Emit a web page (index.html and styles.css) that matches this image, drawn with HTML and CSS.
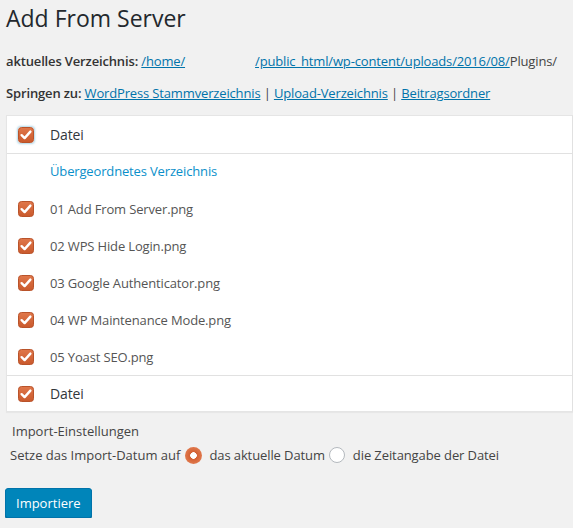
FILE: index.html
```html
<!DOCTYPE html>
<html>
<head>
<meta charset="utf-8">
<link rel="stylesheet" href="styles.css">
</head>
<body>
<div class="wrap">
  <h1 class="title">Add From Server</h1>
  <p class="line"><strong>aktuelles Verzeichnis:</strong> <a href="#">/home/</a><span class="gap"></span><a href="#">/public_html/wp-content/uploads/2016/08/</a>Plugins/</p>
  <p class="line"><strong>Springen zu:</strong> <a href="#">WordPress Stammverzeichnis</a> | <a href="#">Upload-Verzeichnis</a> | <a href="#">Beitragsordner</a></p>

  <div class="table">
    <div class="row head">
      <span class="cb focus"><svg viewBox="0 0 16 16" width="16" height="16"><defs><linearGradient id="g1" x1="0" y1="0" x2="0" y2="1"><stop offset="0" stop-color="#e0774a"/><stop offset="1" stop-color="#c9592c"/></linearGradient></defs><rect x="0.5" y="0.5" width="15" height="15" rx="3" fill="url(#g1)" stroke="#b9532a"/><path d="M3.6 8.2 L6.6 11.1 L12.4 4.6" fill="none" stroke="#fff" stroke-width="2.4" stroke-linecap="round" stroke-linejoin="round"/></svg></span>
      <span class="label">Datei</span>
    </div>
    <div class="row parent">
      <span class="cb-empty"></span>
      <a class="plink" href="#">Übergeordnetes Verzeichnis</a>
    </div>
    <div class="row file">
      <span class="cb"><svg viewBox="0 0 16 16" width="16" height="16"><rect x="0.5" y="0.5" width="15" height="15" rx="3" fill="url(#g1)" stroke="#b9532a"/><path d="M3.6 8.2 L6.6 11.1 L12.4 4.6" fill="none" stroke="#fff" stroke-width="2.4" stroke-linecap="round" stroke-linejoin="round"/></svg></span>
      <span class="label">01 Add From Server.png</span>
    </div>
    <div class="row file">
      <span class="cb"><svg viewBox="0 0 16 16" width="16" height="16"><rect x="0.5" y="0.5" width="15" height="15" rx="3" fill="url(#g1)" stroke="#b9532a"/><path d="M3.6 8.2 L6.6 11.1 L12.4 4.6" fill="none" stroke="#fff" stroke-width="2.4" stroke-linecap="round" stroke-linejoin="round"/></svg></span>
      <span class="label">02 WPS Hide Login.png</span>
    </div>
    <div class="row file">
      <span class="cb"><svg viewBox="0 0 16 16" width="16" height="16"><rect x="0.5" y="0.5" width="15" height="15" rx="3" fill="url(#g1)" stroke="#b9532a"/><path d="M3.6 8.2 L6.6 11.1 L12.4 4.6" fill="none" stroke="#fff" stroke-width="2.4" stroke-linecap="round" stroke-linejoin="round"/></svg></span>
      <span class="label">03 Google Authenticator.png</span>
    </div>
    <div class="row file">
      <span class="cb"><svg viewBox="0 0 16 16" width="16" height="16"><rect x="0.5" y="0.5" width="15" height="15" rx="3" fill="url(#g1)" stroke="#b9532a"/><path d="M3.6 8.2 L6.6 11.1 L12.4 4.6" fill="none" stroke="#fff" stroke-width="2.4" stroke-linecap="round" stroke-linejoin="round"/></svg></span>
      <span class="label">04 WP Maintenance Mode.png</span>
    </div>
    <div class="row file">
      <span class="cb"><svg viewBox="0 0 16 16" width="16" height="16"><rect x="0.5" y="0.5" width="15" height="15" rx="3" fill="url(#g1)" stroke="#b9532a"/><path d="M3.6 8.2 L6.6 11.1 L12.4 4.6" fill="none" stroke="#fff" stroke-width="2.4" stroke-linecap="round" stroke-linejoin="round"/></svg></span>
      <span class="label">05 Yoast SEO.png</span>
    </div>
    <div class="row foot">
      <span class="cb"><svg viewBox="0 0 16 16" width="16" height="16"><rect x="0.5" y="0.5" width="15" height="15" rx="3" fill="url(#g1)" stroke="#b9532a"/><path d="M3.6 8.2 L6.6 11.1 L12.4 4.6" fill="none" stroke="#fff" stroke-width="2.4" stroke-linecap="round" stroke-linejoin="round"/></svg></span>
      <span class="label">Datei</span>
    </div>
  </div>

  <div class="settings">
    <div class="settings-title">Import-Einstellungen</div>
    <div class="settings-row">
      <span>Setze das Import-Datum auf</span>
      <span class="radio on"></span>
      <span class="rlabel">das aktuelle Datum</span>
      <span class="radio"></span>
      <span class="rlabel">die Zeitangabe der Datei</span>
    </div>
  </div>

  <button class="btn">Importiere</button>
</div>
</body>
</html>
```

FILE: styles.css
```css
html, body {
  margin: 0;
  padding: 0;
  background: #f1f1f1;
}
body {
  font-family: "Open Sans", "Noto Sans", sans-serif;
  font-size: 13px;
  color: #444;
}
.wrap {
  padding: 0 0 0 6px;
}
.title {
  margin: 0;
  padding: 4px 0 0 0;
  font-size: 23px;
  font-weight: 400;
  line-height: 29px;
  color: #23282d;
}
.line {
  margin: 0;
  line-height: 20px;
  letter-spacing: -0.15px;
}
.line:nth-of-type(1) {
  margin-top: 18px;
}
.line:nth-of-type(2) {
  margin-top: 12px;
}
.line strong {
  font-weight: 600;
  color: #333;
}
.line a {
  color: #0073aa;
  text-decoration: underline;
}
.gap {
  display: inline-block;
  width: 70px;
}
.table {
  margin-top: 12px;
  background: #fff;
  border: 1px solid #e5e5e5;
  border-right-color: #e1e1e1;
  box-shadow: 0 1px 1px rgba(0,0,0,0.04);
  letter-spacing: -0.15px;
}
.row {
  display: flex;
  align-items: center;
  height: 37px;
  padding-left: 11px;
}
.head {
  height: 37px;
  border-bottom: 1px solid #e1e1e1;
}
.parent {
  height: 36px;
}
.parent .plink {
  position: relative;
  top: -1px;
}
.foot {
  height: 35px;
  border-top: 1px solid #e1e1e1;
}
.cb, .cb-empty {
  width: 16px;
  height: 16px;
  flex: none;
  display: block;
  margin-right: 16px;
  border-radius: 3px;
}
.cb svg {
  display: block;
}
.cb.focus {
  box-shadow: 0 0 2px 1px rgba(30,140,190,0.35);
}
.label {
  color: #555;
  font-size: 13px;
}
.head .label, .foot .label {
  color: #32373c;
  font-size: 14px;
}
.plink {
  color: #0a8fca;
  text-decoration: none;
}
.settings {
  padding: 7px 0 0 0;
}
.settings-title {
  padding-left: 6px;
  line-height: 24px;
  color: #444;
}
.settings-row {
  display: flex;
  align-items: center;
  padding-left: 4px;
  line-height: 24px;
}
.radio {
  width: 16px;
  height: 16px;
  border-radius: 50%;
  border: 1px solid #b4b9be;
  background: #fff;
  box-sizing: border-box;
  margin: 0 4px 0 3px;
  flex: none;
}
.radio.on {
  width: 17px;
  height: 17px;
  border: none;
  background: radial-gradient(circle, #fff 0 3px, #d36134 3.6px, #e0784c 8.5px);
  margin: 0 7px 0 5px;
}
.rlabel {
  margin-right: 2px;
  letter-spacing: -0.1px;
}
.rlabel + .radio {
  margin-left: 2px;
  margin-right: 8px;
}
.btn {
  margin-top: 21px;
  margin-left: -1px;
  display: block;
  height: 30px;
  padding: 0 10px;
  font-family: "Open Sans", "Noto Sans", sans-serif;
  font-size: 13px;
  color: #fff;
  background: #0085ba;
  border: 1px solid #0073aa;
  border-radius: 3px;
  box-shadow: 0 1px 0 #006799;
}
```
